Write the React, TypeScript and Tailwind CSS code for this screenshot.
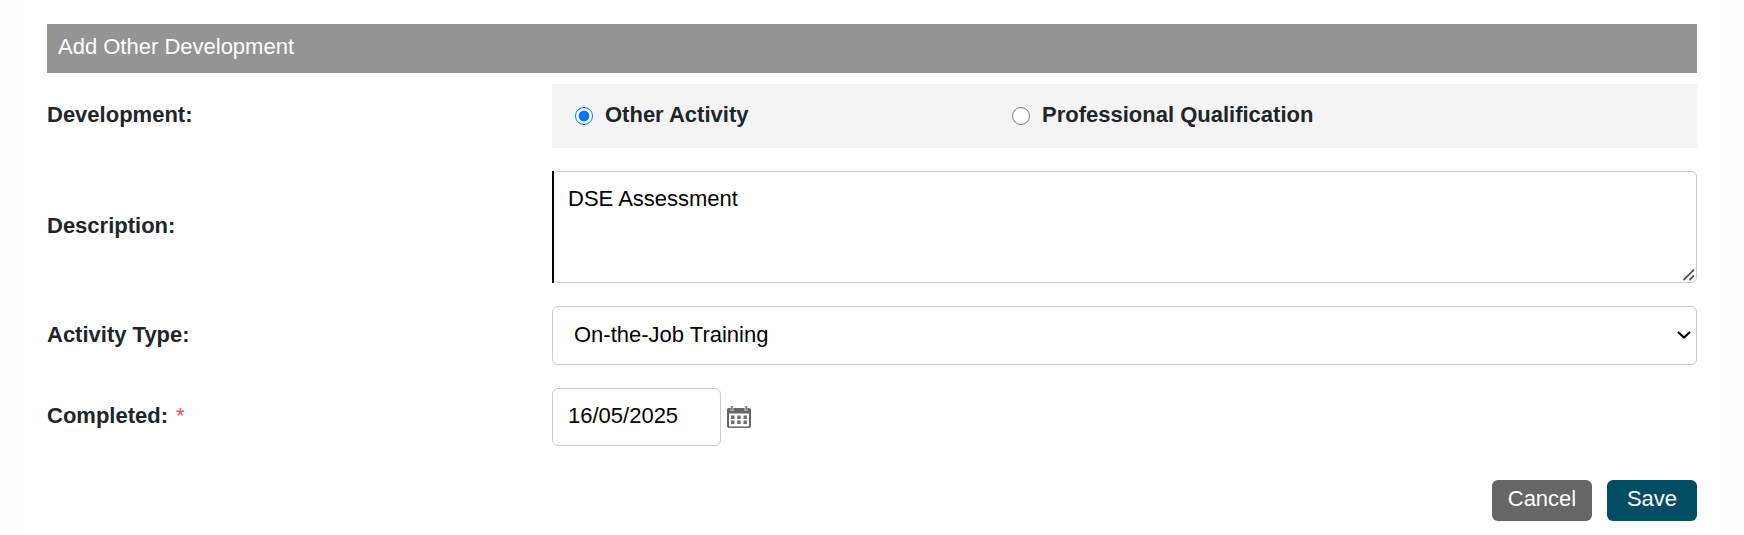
import React, { useState } from "react";

const ACTIVITY_TYPES = ["On-the-Job Training", "Course", "Conference", "Mentoring"];

const DEVELOPMENT_KINDS = [
  { value: "activity", label: "Other Activity" },
  { value: "qualification", label: "Professional Qualification" },
];

const CalendarIcon: React.FC = () => (
  <svg viewBox="0 0 24 23" className="h-[23px] w-6" aria-hidden="true">
    <path
      fill="#666666"
      fillRule="evenodd"
      d="M2 2h20a2 2 0 0 1 2 2v16a2 2 0 0 1-2 2H2a2 2 0 0 1-2-2V4a2 2 0 0 1 2-2zM2 7.500v12a1 1 0 0 0 1 1h18a1 1 0 0 0 1-1v-12z"
    />
    <path fill="#d0d0d0" d="M3.500 0h3v5h-3zM17.500 0h3v5h-3z" />
    <path fill="#777777" d="M4 0h1.500v4.500H4zM18.500 0H20v4.500h-1.500z" />
    <path fill="#707070" d="M4 9.500h3.500V13H4zM10.200 9.500h3.500V13h-3.500zM16.500 9.500H20V13h-3.500zM4 14.500h3.500V18H4zM10.200 14.500h3.500V18h-3.500zM16.500 14.500H20V18h-3.500z" />
  </svg>
);

interface FieldRowProps {
  label: string;
  htmlFor?: string;
  required?: boolean;
  children: React.ReactNode;
}

const FieldRow: React.FC<FieldRowProps> = ({ label, htmlFor, required, children }) => (
  <div className="grid grid-cols-[505fr_1145fr] items-center">
    <label htmlFor={htmlFor} className="pb-0.5 font-bold">
      {label}
      {required && <span className="ml-2 font-normal text-[#f0504f]">*</span>}
    </label>
    {children}
  </div>
);

const App: React.FC = () => {
  const [kind, setKind] = useState("activity");
  const [description, setDescription] = useState("DSE Assessment");
  const [activityType, setActivityType] = useState(ACTIVITY_TYPES[0]);
  const [completed, setCompleted] = useState("16/05/2025");

  return (
    <div className="min-h-screen bg-[#fafeff] px-[17px] font-['Liberation_Sans',Arial,sans-serif] text-[22px] leading-8 text-[#212529]">
      <form className="min-h-screen bg-white px-[30px] pt-6" onSubmit={(e) => e.preventDefault()}>
        <h1 className="bg-[#949494] px-[11px] pt-[7px] pb-[10px] text-white">Add Other Development</h1>

        <div className="mt-[11px] flex flex-col gap-[23px]">
          <FieldRow label="Development:">
            <div className="grid h-16 grid-cols-[437fr_685fr] items-center bg-[#f4f4f4] pl-[23px]">
              {DEVELOPMENT_KINDS.map((k) => (
                <label key={k.value} className="flex items-center gap-3 font-bold">
                  <input
                    type="radio"
                    name="kind"
                    value={k.value}
                    checked={kind === k.value}
                    onChange={() => setKind(k.value)}
                    className="size-[18px]"
                  />
                  <span className="pb-0.5">{k.label}</span>
                </label>
              ))}
            </div>
          </FieldRow>

          <FieldRow label="Description:" htmlFor="description">
            <div className="relative">
              <textarea
                id="description"
                value={description}
                onChange={(e) => setDescription(e.target.value)}
                className="block h-28 w-full resize-y rounded-md border border-[#cccccc] px-[15px] py-[11px] text-black outline-none [&::-webkit-resizer]:bg-transparent"
              />
              <span className="absolute inset-y-0 left-0 w-0.5 bg-black" />
              <svg
                viewBox="0 0 12 12"
                className="pointer-events-none absolute right-0.5 bottom-0.5 size-3"
                fill="none"
                stroke="#555555"
                strokeWidth="1.8"
                aria-hidden="true"
              >
                <path d="M.5 11L11 .5M6.500 11L11 6.500" />
              </svg>
            </div>
          </FieldRow>

          <FieldRow label="Activity Type:" htmlFor="activity-type">
            <div className="relative">
              <select
                id="activity-type"
                value={activityType}
                onChange={(e) => setActivityType(e.target.value)}
                className="block h-[59px] w-full appearance-none rounded-md border border-[#cccccc] bg-white px-[21px] pb-0.5 text-black"
              >
                {ACTIVITY_TYPES.map((t) => (
                  <option key={t}>{t}</option>
                ))}
              </select>
              <svg
                viewBox="0 0 14 8"
                className="pointer-events-none absolute top-[25px] right-[6px] h-2 w-3.5"
                fill="none"
                stroke="#000000"
                strokeWidth="2.2"
                aria-hidden="true"
              >
                <path d="M1 1l6 5.500L13 1" />
              </svg>
            </div>
          </FieldRow>

          <FieldRow label="Completed:" htmlFor="completed" required>
            <div className="flex items-center gap-1.5">
              <input
                id="completed"
                type="text"
                value={completed}
                onChange={(e) => setCompleted(e.target.value)}
                className="h-[58px] w-[169px] rounded-md border border-[#cccccc] px-[15px] pb-0.5 text-black"
              />
              <button type="button" aria-label="Choose date">
                <CalendarIcon />
              </button>
            </div>
          </FieldRow>
        </div>

        <div className="mt-[34px] flex justify-end gap-[15px] text-white">
          <button type="button" className="h-[41px] w-[100px] rounded-md bg-[#666666] pb-1">
            Cancel
          </button>
          <button type="submit" className="h-[41px] w-[90px] rounded-md bg-[#004d64] pb-1">
            Save
          </button>
        </div>
      </form>
    </div>
  );
};

export default App;
